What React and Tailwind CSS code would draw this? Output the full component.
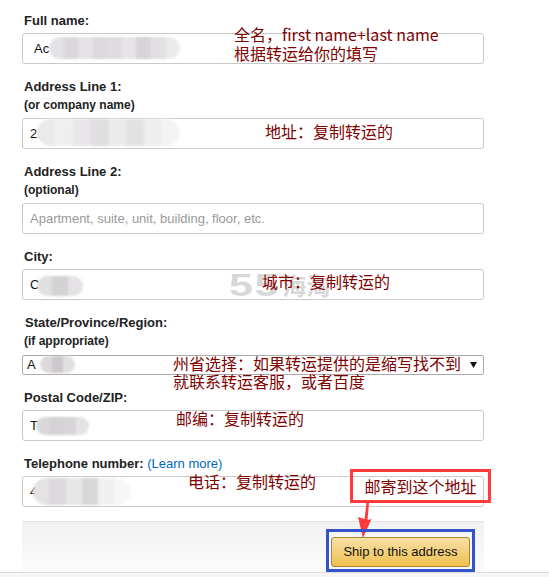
const CJK = "font-['Noto_Sans_CJK_SC','Noto_Sans',sans-serif]";

function Mosaic({ className, colors }) {
  return (
    <div className={`absolute flex overflow-hidden rounded-full blur-[1px] ${className}`}>
      {colors.map((c, i) => (
        <span key={i} className="flex-1 h-full" style={{ backgroundColor: c }} />
      ))}
    </div>
  );
}

function Field({ label, sub, children, last }) {
  return (
    <div className={last ? "" : "mb-[13px]"}>
      <div className="pl-[2px] text-[13px] leading-[19px] font-bold text-[#222]">{label}</div>
      {sub ? (
        <div className="pl-[2px] pt-[1px] mb-[5px] text-[12px] leading-[16px] font-bold text-[#222]">{sub}</div>
      ) : (
        <div className="h-[3px]" />
      )}
      {children}
    </div>
  );
}

function Input({ value, placeholder, pad = "pl-[7px]", children }) {
  return (
    <div className={`relative h-[31px] w-[462px] rounded-[3px] border border-[#c9c9c9] bg-white flex items-center ${pad} text-[13px]`}>
      {value ? (
        <span className="text-[#111]">{value}</span>
      ) : (
        <span className="text-[#999]">{placeholder}</span>
      )}
      {children}
    </div>
  );
}

export default function App() {
  return (
    <div className="relative w-[549px] h-[577px] overflow-hidden bg-white font-['Liberation_Sans',Arial,sans-serif]">
      <div className="pl-[22px] pt-[11px] w-[484px]">
        <Field label="Full name:">
          <Input value="Ac" pad="pl-[11px]">
            <Mosaic
              className="left-[26px] top-[3px] w-[131px] h-[22px]"
              colors={["#e4e2e4", "#dad6d9", "#e4e2e4", "#dbd9db", "#dedcde", "#e6e4e6", "#d6d4d6", "#e2e0e2", "#ecebec"]}
            />
          </Input>
        </Field>

        <Field label="Address Line 1:" sub="(or company name)">
          <Input value="2!">
            <Mosaic
              className="left-[14px] top-[0px] w-[143px] h-[27px]"
              colors={["#ebeaeb", "#f0eff0", "#e8e6e8", "#e0dee0", "#ebebeb", "#e3e2e3", "#eeeeee", "#f4f4f4"]}
            />
          </Input>
        </Field>

        <Field label="Address Line 2:" sub="(optional)">
          <Input placeholder="Apartment, suite, unit, building, floor, etc." />
        </Field>

        <Field label="City:">
          <Input value="C">
            <Mosaic className="left-[14px] top-[6px] w-[46px] h-[20px]" colors={["#e0e0e0", "#d5d2d5", "#e4e2e4"]} />
          </Input>
        </Field>

        <div className="mb-[13px]">
          <div className="pl-[3px] text-[13px] leading-[19px] font-bold text-[#222]">State/Province/Region:</div>
          <div className="pl-[2px] pt-[1px] mb-[6px] text-[12px] leading-[16px] font-bold text-[#222]">(if appropriate)</div>
          <div className="relative h-[20px] w-[462px] border border-[#aaaaaa] rounded-[2px] bg-white flex items-center pl-[4px] text-[13px] text-[#111]">
            <span>A</span>
            <Mosaic className="left-[17px] top-[0px] w-[35px] h-[17px]" colors={["#dcd8dc", "#ccc8cc", "#e2dfe2"]} />
            <svg className="absolute right-[6px] top-[6px]" width="7" height="6" viewBox="0 0 7 6">
              <polygon points="0,0 7,0 3.5,6" fill="#111" />
            </svg>
          </div>
        </div>

        <Field label="Postal Code/ZIP:">
          <Input value="T">
            <Mosaic className="left-[13px] top-[6px] w-[53px] h-[18px]" colors={["#dad7da", "#d5d2d5", "#d8d5d8", "#e5e3e5"]} />
          </Input>
        </Field>

        <Field
          last
          label={
            <>
              Telephone number: <span className="font-normal text-[#0066c0]">(Learn more)</span>
            </>
          }
        >
          <Input value="4">
            <Mosaic
              className="left-[10px] top-[1px] w-[98px] h-[27px]"
              colors={["#e4e2e4", "#dcd9dc", "#e8e7e8", "#d9d6d9", "#f0f0f0", "#f7f7f7"]}
            />
          </Input>
        </Field>

        <div className="mt-[14px] h-[51px] w-[462px] border-t border-[#e3e3e3] bg-linear-to-b from-[#f2f2f2] to-[#fbfbfb] flex justify-end pt-[15px] pr-[14px]">
          <button className="h-[30px] w-[139px] rounded-[3px] border border-[#a88734] bg-linear-to-b from-[#f7dfa5] to-[#f0c14b] text-[13px] text-[#111]">
            Ship to this address
          </button>
        </div>
      </div>
      <div className="h-[10px] border-t border-[#dddddd] bg-[#f6f6f6]" />

      {/* watermark */}
      <div className="absolute left-[229px] top-[268px] flex items-end leading-[34px] font-bold text-[#c8c8c8] opacity-70">
        <span className="inline-block text-[32px] scale-x-[1.35] origin-left tracking-[1px]">55</span>
        <span className={`${CJK} text-[24px] ml-[16px]`}>海淘</span>
      </div>

      {/* annotations */}
      <div className={`absolute left-[234px] top-[25px] ${CJK} text-[16px] leading-[19px] text-[#800000]`}>
        <div>全名，first name+last name</div>
        <div>根据转运给你的填写</div>
      </div>
      <div className={`absolute left-[265px] top-[122px] ${CJK} text-[16px] leading-[19px] text-[#800000]`}>地址：复制转运的</div>
      <div className={`absolute left-[262px] top-[272px] ${CJK} text-[16px] leading-[19px] text-[#800000]`}>城市：复制转运的</div>
      <div className={`absolute left-[173px] top-[354px] ${CJK} text-[16px] leading-[18px] text-[#800000]`}>
        <div>州省选择：如果转运提供的是缩写找不到</div>
        <div>就联系转运客服，或者百度</div>
      </div>
      <div className={`absolute left-[176px] top-[409px] ${CJK} text-[16px] leading-[19px] text-[#800000]`}>邮编：复制转运的</div>
      <div className={`absolute left-[188px] top-[472px] ${CJK} text-[16px] leading-[19px] text-[#800000]`}>电话：复制转运的</div>

      <div className={`absolute left-[350px] top-[469px] w-[141px] h-[34px] border-[3px] border-[#ff3b3b] flex items-center justify-center ${CJK} text-[16px] text-[#800000]`}>
        邮寄到这个地址
      </div>
      <svg className="absolute left-[355px] top-[502px]" width="18" height="38" viewBox="0 0 18 38">
        <polygon points="11.5,1 14,1 12.5,18 16.5,17 8,36 3,15 9.5,17" fill="#ff3b3b" />
      </svg>
      <div className="absolute left-[326px] top-[529px] w-[149px] h-[43px] border-[3px] border-[#3352cc]" />
    </div>
  );
}
